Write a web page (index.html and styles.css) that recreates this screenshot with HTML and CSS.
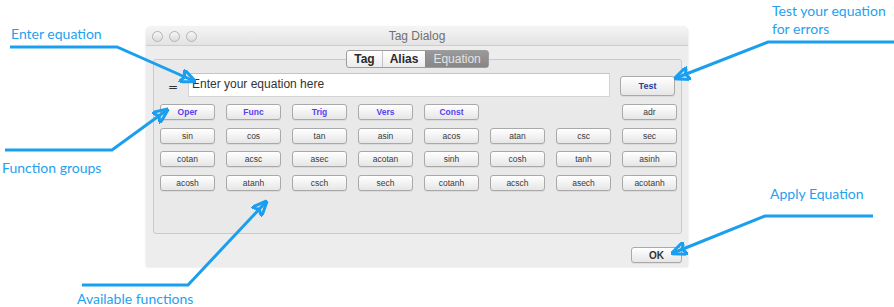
FILE: index.html
```html
<!DOCTYPE html>
<html lang="en">
<head>
    <meta charset="UTF-8">
    <title>Tag Dialog - Equation</title>
    <link rel="stylesheet" href="styles.css">
</head>
<body>
    <div class="page">
        <div class="window">
            <div class="titlebar">
                <div class="lights">
                    <span class="light"></span>
                    <span class="light"></span>
                    <span class="light"></span>
                </div>
                <div class="title">Tag Dialog</div>
            </div>
            <div class="window-body">
                <div class="tabs">
                    <span class="tab">Tag</span>
                    <span class="tab">Alias</span>
                    <span class="tab selected">Equation</span>
                </div>
                <div class="group">
                    <div class="equation-row">
                        <span class="equals">=</span>
                        <div class="field">Enter your equation here</div>
                        <button class="btn btn-test">Test</button>
                    </div>
                    <div class="func-grid">
                        <button class="btn btn-group">Oper</button>
                        <button class="btn btn-group">Func</button>
                        <button class="btn btn-group">Trig</button>
                        <button class="btn btn-group">Vers</button>
                        <button class="btn btn-group">Const</button>
                        <span></span>
                        <span></span>
                        <button class="btn">adr</button>

                        <button class="btn">sin</button>
                        <button class="btn">cos</button>
                        <button class="btn">tan</button>
                        <button class="btn">asin</button>
                        <button class="btn">acos</button>
                        <button class="btn">atan</button>
                        <button class="btn">csc</button>
                        <button class="btn">sec</button>

                        <button class="btn">cotan</button>
                        <button class="btn">acsc</button>
                        <button class="btn">asec</button>
                        <button class="btn">acotan</button>
                        <button class="btn">sinh</button>
                        <button class="btn">cosh</button>
                        <button class="btn">tanh</button>
                        <button class="btn">asinh</button>

                        <button class="btn">acosh</button>
                        <button class="btn">atanh</button>
                        <button class="btn">csch</button>
                        <button class="btn">sech</button>
                        <button class="btn">cotanh</button>
                        <button class="btn">acsch</button>
                        <button class="btn">asech</button>
                        <button class="btn">acotanh</button>
                    </div>
                </div>
                <div class="footer">
                    <button class="btn btn-ok">OK</button>
                </div>
            </div>
        </div>

        <!-- callouts drawn over the screenshot -->
        <svg class="arrows" viewBox="0 0 894 307" width="894" height="307">
            <defs>
                <marker id="head" markerUnits="userSpaceOnUse" markerWidth="16" markerHeight="14"
                        viewBox="0 0 16 14" refX="14" refY="7" orient="auto">
                    <path d="M0 0 L16 7 L0 14 L4 7 Z" fill="#1a9ff0"/>
                </marker>
            </defs>
            <path d="M10 47 H117 L194 81" marker-end="url(#head)"/>
            <path d="M894 42 H768 L676 78" marker-end="url(#head)"/>
            <path d="M5 150 H112 L167 110" marker-end="url(#head)"/>
            <path d="M82 285 H188 L266 202" marker-end="url(#head)"/>
            <path d="M873 216 H765 L673 253" marker-end="url(#head)"/>
        </svg>
        <div class="note note-enter">Enter equation</div>
        <div class="note note-test">Test your equation<br>for errors</div>
        <div class="note note-groups">Function groups</div>
        <div class="note note-available">Available functions</div>
        <div class="note note-apply">Apply Equation</div>
    </div>
</body>
</html>
```

FILE: styles.css
```css
body {
    margin: 0;
    background-color: #fff;
}
.page {
    position: relative;
    width: 894px;
    height: 307px;
    padding: 27px 0 0 146px;
    box-sizing: border-box;
    overflow: hidden;
}
.window {
    width: 542px;
    height: 240px;
    background-color: #ededed;
    border-radius: 5px 5px 2px 2px;
    box-shadow: 0 0 2px rgba(0, 0, 0, 0.18);
    display: flex;
    flex-direction: column;
    font-family: "Liberation Sans", sans-serif;
}
.titlebar {
    position: relative;
    height: 18px;
    background: linear-gradient(#f4f4f4, #e3e3e3);
    border-bottom: 1px solid #cdcdcd;
    border-radius: 5px 5px 0 0;
    display: flex;
    align-items: center;
    justify-content: center;
}
.lights {
    position: absolute;
    left: 6px;
    top: 4px;
    display: flex;
    gap: 6px;
}
.light {
    width: 9px;
    height: 9px;
    border-radius: 50%;
    border: 1px solid #b4b4b4;
    background: linear-gradient(#f6f6f6, #dcdcdc);
}
.title {
    font-size: 12px;
    color: #707070;
}
.window-body {
    flex: 1;
    padding: 4px 6px 0 7px;
    display: flex;
    flex-direction: column;
}
.tabs {
    align-self: center;
    display: flex;
    height: 16px;
    border: 1px solid #9d9d9d;
    border-radius: 3px;
    background: linear-gradient(#ffffff, #ececec);
    margin-bottom: -9px;
    position: relative;
    z-index: 1;
    font-size: 12px;
    font-weight: bold;
}
.tab {
    display: flex;
    align-items: center;
    padding: 0 7px;
    color: #2a2a2a;
    border-left: 1px solid #c4c4c4;
}
.tab:first-child {
    border-left: none;
}
.tab.selected {
    background: linear-gradient(#9a9a9a, #868686);
    color: #e4e4e4;
    font-weight: normal;
    border-left-color: #8a8a8a;
    padding: 0 7px;
}
.group {
    height: 175px;
    box-sizing: border-box;
    border: 1px solid #cacaca;
    border-radius: 3px;
    background-color: #e9e9e9;
    padding: 13px 0 0 6px;
}
.equation-row {
    display: flex;
    align-items: center;
    height: 24px;
}
.equals {
    width: 28px;
    text-align: center;
    font-family: "DejaVu Sans", sans-serif;
    font-size: 12px;
    color: #333;
    padding-top: 4px;
    padding-right: 2px;
    box-sizing: border-box;
}
.field {
    width: 422px;
    height: 24px;
    box-sizing: border-box;
    background-color: #fff;
    border: 1px solid #d4d4d4;
    border-top-color: #c4c4c4;
    padding: 3px 0 0 3px;
    font-size: 12px;
    color: #333;
}
.btn {
    width: 55px;
    height: 16px;
    padding: 0;
    border: 1px solid #a9a9a9;
    border-radius: 3px;
    background: linear-gradient(#ffffff, #f0f0f0 60%, #e6e6e6);
    box-shadow: 0 1px 0 rgba(0, 0, 0, 0.06);
    font-family: "Liberation Sans", sans-serif;
    font-size: 8.5px;
    color: #3a3a3a;
}
.btn-group {
    color: #5a3ff0;
    font-weight: bold;
}
.btn-test {
    margin-left: 10px;
    height: 20px;
    margin-top: 1px;
    color: #2b3c99;
    font-weight: bold;
    font-size: 9px;
}
.func-grid {
    margin-top: 7px;
    display: grid;
    grid-template-columns: repeat(8, 55px);
    grid-auto-rows: 16px;
    column-gap: 11px;
    row-gap: 7.5px;
}
.footer {
    display: flex;
    justify-content: flex-end;
    padding: 13px 0 0 0;
}
.btn-ok {
    width: 51px;
    height: 16px;
    font-size: 10px;
    font-weight: bold;
    color: #333;
}
.arrows {
    position: absolute;
    left: 0;
    top: 0;
    pointer-events: none;
}
.arrows path {
    fill: none;
    stroke: #1a9ff0;
    stroke-width: 3;
}
.note {
    position: absolute;
    font-family: "Lato", sans-serif;
    font-size: 14px;
    line-height: 18px;
    color: #1ea1ef;
    white-space: nowrap;
}
.note-enter {
    left: 11px;
    top: 25px;
}
.note-test {
    left: 772px;
    top: 2px;
}
.note-groups {
    left: 2px;
    top: 159px;
}
.note-available {
    left: 77px;
    top: 290px;
}
.note-apply {
    left: 770px;
    top: 185px;
}
```
